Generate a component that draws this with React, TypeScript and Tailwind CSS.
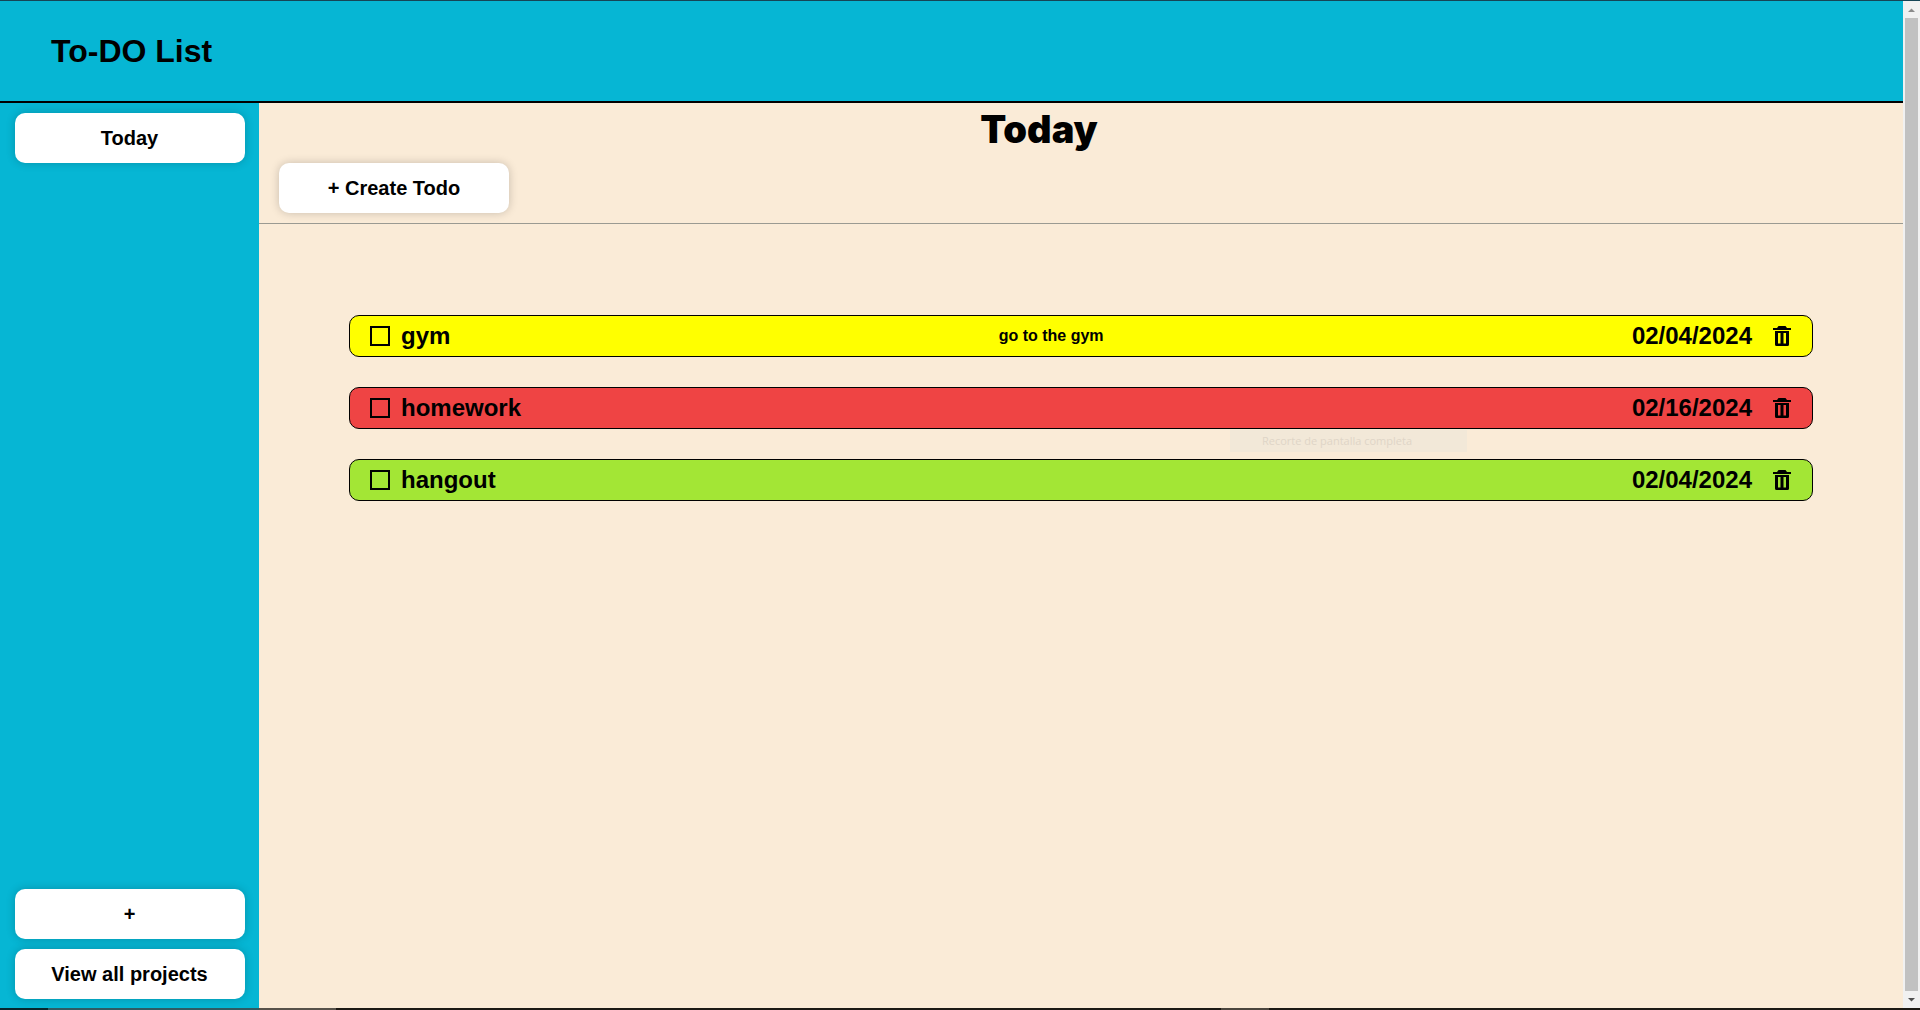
import React from "react";

type Todo = { title: string; note: string; date: string; tone: string };

const todos: Todo[] = [
  { title: "gym", note: "go to the gym", date: "02/04/2024", tone: "bg-[#ffff00]" },
  { title: "homework", note: "", date: "02/16/2024", tone: "bg-[#ef4444]" },
  { title: "hangout", note: "", date: "02/04/2024", tone: "bg-[#a3e635]" },
];

function PillButton({ children }: { children: React.ReactNode }) {
  return (
    <button
      type="button"
      className="h-[50px] w-[230px] shrink-0 rounded-[10px] bg-white text-xl font-bold shadow-[0_0_10px_rgba(0,0,0,0.2)]"
    >
      {children}
    </button>
  );
}

function TrashIcon() {
  return (
    <svg viewBox="0 0 20 20" className="size-5" fill="currentColor" aria-hidden="true">
      <path d="M6.500 0h7l1.500 2h4v2H1V2h4z" />
      <path
        fillRule="evenodd"
        d="M3 5h14v13.500q0 1.500-1.500 1.500h-11Q3 20 3 18.500zM6 7v10.500h2.500V7zM11.500 7v10.500H14V7z"
      />
    </svg>
  );
}

function TodoRow({ title, note, date, tone }: Todo) {
  return (
    <li className={`flex h-[42px] items-center justify-between rounded-[10px] border border-black px-5 font-bold ${tone}`}>
      <label className="flex items-center gap-[11px] pr-5 text-2xl">
        <input type="checkbox" className="size-5 appearance-none border-2 border-black checked:bg-black" />
        {title}
      </label>
      {note && <p className="text-base">{note}</p>}
      <div className="flex items-center gap-5 text-2xl">
        <time>{date}</time>
        <button type="button" aria-label={`Delete ${title}`}>
          <TrashIcon />
        </button>
      </div>
    </li>
  );
}

function ScrollRail() {
  return (
    <div className="flex w-[17px] shrink-0 flex-col items-center bg-[#f1f1f1]" aria-hidden="true">
      <svg viewBox="0 0 17 17" className="size-[17px]">
        <path d="M5 11 8.500 7.500l3.500 3.500z" fill="#8b8b8b" />
      </svg>
      <div className="w-[13px] grow bg-[#c1c1c1]" />
      <svg viewBox="0 0 17 17" className="size-[17px]">
        <path d="M5 7h7l-3.500 3.500z" fill="#505050" />
      </svg>
    </div>
  );
}

function TaskbarEdge() {
  return (
    <div className="flex h-[2px] bg-[#1c1914]" aria-hidden="true">
      <div className="w-12 bg-[#06262c]" />
      <div className="w-[211px] bg-[#2f5a62]" />
      <div className="w-[77px] bg-[#57524a]" />
      <div className="ml-[885px] w-12 bg-[#4b463e]" />
    </div>
  );
}

export default function App() {
  return (
    <div className="relative flex min-h-screen flex-col border-t border-[#164556] bg-[#faebd7] font-['Liberation_Sans',Arial,sans-serif] text-black">
      <div className="flex grow">
        <div className="flex min-w-0 grow flex-col">
          <header className="flex h-[102px] items-center border-b-2 border-black bg-[#06b6d4] px-[51px]">
            <h1 className="text-[32px] font-bold">To-DO List</h1>
          </header>
          <div className="flex grow">
            <nav className="flex w-[259px] shrink-0 flex-col items-center justify-between overflow-hidden bg-[#06b6d4] pt-[10px] pb-[9px]">
              <PillButton>Today</PillButton>
              <div className="flex flex-col gap-[10px]">
                <PillButton>+</PillButton>
                <PillButton>View all projects</PillButton>
              </div>
            </nav>
            <main className="min-w-0 grow">
              <section className="border-b border-[#9a9a92] px-5 pb-[10px]">
                <h2 className="pr-[84px] pb-2 text-center font-[Inter,sans-serif] text-[38px] leading-[52px] font-black">
                  Today
                </h2>
                <PillButton>+ Create Todo</PillButton>
              </section>
              <ul className="flex flex-col gap-[30px] px-[90px] pt-[91px]">
                {todos.map((todo) => (
                  <TodoRow key={todo.title} {...todo} />
                ))}
              </ul>
            </main>
          </div>
        </div>
        <ScrollRail />
      </div>
      <TaskbarEdge />
      <p className="absolute top-[429px] left-[1230px] flex h-[22px] w-[237px] items-center bg-[#f2e8d8] pl-8 font-['Open_Sans',sans-serif] text-[11px] text-[#dfd5c7]">
        Recorte de pantalla completa
      </p>
    </div>
  );
}
